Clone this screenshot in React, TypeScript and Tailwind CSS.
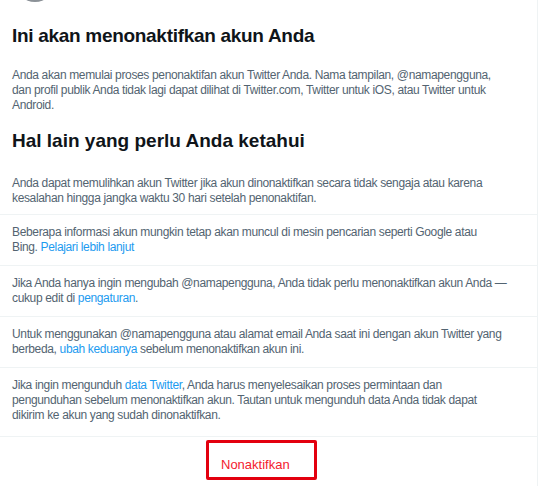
import * as React from "react";

const Link = ({ children }: { children: React.ReactNode }) => (
    <span className="text-[#1d9bf0]">{children}</span>
);

const body = "whitespace-nowrap text-[12px] leading-[15px] tracking-[-0.35px] text-[#536471]";

const Item = ({ children, last = false }: { children: React.ReactNode; last?: boolean }) => (
    <div className={last ? "px-3 pt-[10px] pb-[13px] border-b border-[#eff3f4]" : "px-3 py-[10px] border-b border-[#eff3f4]"}>
        <p className={body}>{children}</p>
    </div>
);

export default function App() {
    return (
        <div className="w-[546px] h-[486px] bg-white overflow-hidden font-['Liberation_Sans',Arial,sans-serif]">
            <div className="w-[538px] h-full border-r border-[#eff3f4]">
                <div className="h-[2px] overflow-hidden">
                    <div className="ml-[15px] -mt-[38px] w-[40px] h-[40px] rounded-full bg-[#8b9197]" />
                </div>

                <h1 className="mt-[22px] px-3 text-[19px] leading-[24px] font-bold tracking-[-0.3px] text-[#0f1419]">
                    Ini akan menonaktifkan akun Anda
                </h1>
                <p className={"mt-[20px] px-3 " + body}>
                    Anda akan memulai proses penonaktifan akun Twitter Anda. Nama tampilan, @namapengguna,
                    <br />
                    dan profil publik Anda tidak lagi dapat dilihat di Twitter.com, Twitter untuk iOS, atau Twitter untuk
                    <br />
                    Android.
                </p>

                <h2 className="mt-[16px] px-3 text-[19px] leading-[24px] font-bold text-[#0f1419]">
                    Hal lain yang perlu Anda ketahui
                </h2>
                <div className="mt-[23px] px-3 pb-[8px] border-b border-[#eff3f4]">
                    <p className={body}>
                        Anda dapat memulihkan akun Twitter jika akun dinonaktifkan secara tidak sengaja atau karena
                        <br />
                        kesalahan hingga jangka waktu 30 hari setelah penonaktifan.
                    </p>
                </div>
                <Item>
                    Beberapa informasi akun mungkin tetap akan muncul di mesin pencarian seperti Google atau
                    <br />
                    Bing. <Link>Pelajari lebih lanjut</Link>
                </Item>
                <Item>
                    Jika Anda hanya ingin mengubah @namapengguna, Anda tidak perlu menonaktifkan akun Anda —
                    <br />
                    cukup edit di <Link>pengaturan</Link>.
                </Item>
                <Item>
                    Untuk menggunakan @namapengguna atau alamat email Anda saat ini dengan akun Twitter yang
                    <br />
                    berbeda, <Link>ubah keduanya</Link> sebelum menonaktifkan akun ini.
                </Item>
                <Item last>
                    Jika ingin mengunduh <Link>data Twitter</Link>, Anda harus menyelesaikan proses permintaan dan
                    <br />
                    pengunduhan sebelum menonaktifkan akun. Tautan untuk mengunduh data Anda tidak dapat
                    <br />
                    dikirim ke akun yang sudah dinonaktifkan.
                </Item>

                <div className="pt-[3px]">
                    <div className="ml-[206px] w-[111px] h-[40px] border-[3px] border-[#e3000f] rounded-[2px] pl-[12px] pt-[14px]">
                        <span className="block text-[13px] leading-[16px] text-[#f4212e]">Nonaktifkan</span>
                    </div>
                </div>
            </div>
        </div>
    );
}
